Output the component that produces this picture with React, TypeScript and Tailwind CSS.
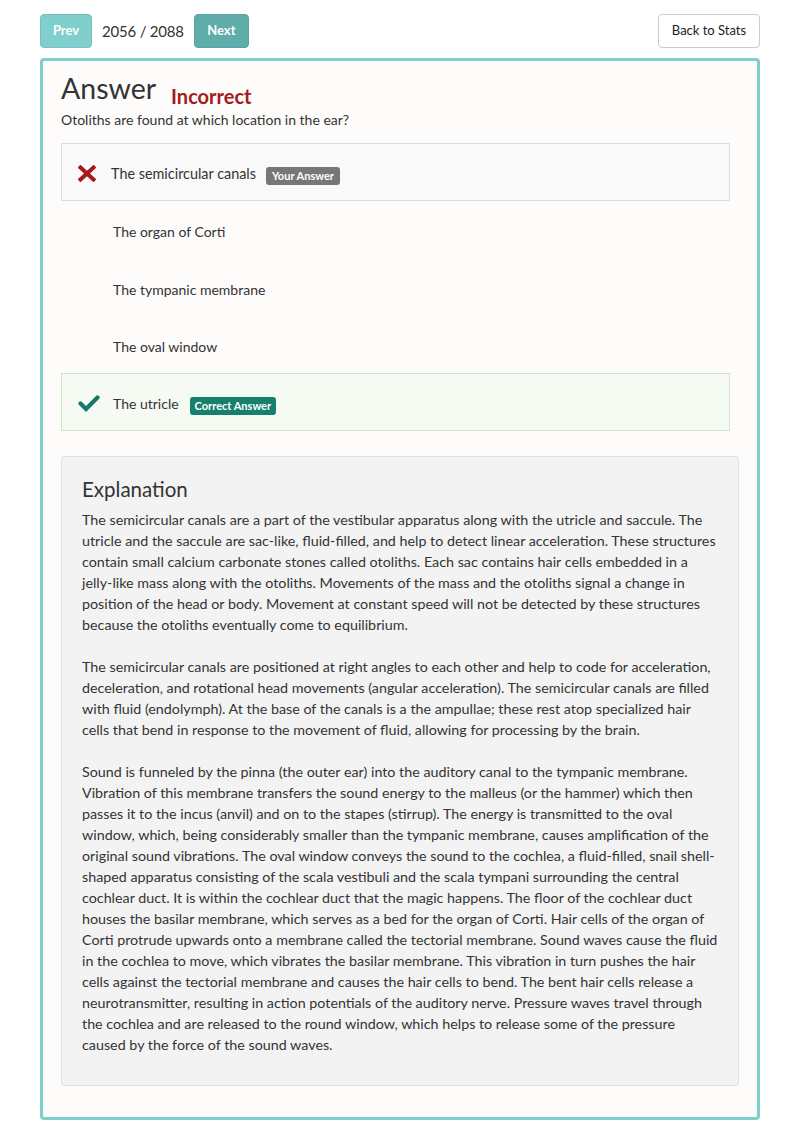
import React from 'react';

const paragraphs = [
  'The semicircular canals are a part of the vestibular apparatus along with the utricle and saccule. The utricle and the saccule are sac-like, fluid-filled, and help to detect linear acceleration. These structures contain small calcium carbonate stones called otoliths. Each sac contains hair cells embedded in a jelly-like mass along with the otoliths. Movements of the mass and the otoliths signal a change in position of the head or body. Movement at constant speed will not be detected by these structures because the otoliths eventually come to equilibrium.',
  'The semicircular canals are positioned at right angles to each other and help to code for acceleration, deceleration, and rotational head movements (angular acceleration). The semicircular canals are filled with fluid (endolymph). At the base of the canals is a the ampullae; these rest atop specialized hair cells that bend in response to the movement of fluid, allowing for processing by the brain.',
  'Sound is funneled by the pinna (the outer ear) into the auditory canal to the tympanic membrane. Vibration of this membrane transfers the sound energy to the malleus (or the hammer) which then passes it to the incus (anvil) and on to the stapes (stirrup). The energy is transmitted to the oval window, which, being considerably smaller than the tympanic membrane, causes amplification of the original sound vibrations. The oval window conveys the sound to the cochlea, a fluid-filled, snail shell-shaped apparatus consisting of the scala vestibuli and the scala tympani surrounding the central cochlear duct. It is within the cochlear duct that the magic happens. The floor of the cochlear duct houses the basilar membrane, which serves as a bed for the organ of Corti. Hair cells of the organ of Corti protrude upwards onto a membrane called the tectorial membrane. Sound waves cause the fluid in the cochlea to move, which vibrates the basilar membrane. This vibration in turn pushes the hair cells against the tectorial membrane and causes the hair cells to bend. The bent hair cells release a neurotransmitter, resulting in action potentials of the auditory nerve. Pressure waves travel through the cochlea and are released to the round window, which helps to release some of the pressure caused by the force of the sound waves.',
];

const Cross = () => (
  <svg width="18" height="17" viewBox="0 0 18 17" className="shrink-0">
    <path d="M2.5 2.5 L15.5 14.5 M15.5 2.5 L2.5 14.5" stroke="#a31b1b" strokeWidth="4" strokeLinecap="square" />
  </svg>
);

const Check = () => (
  <svg width="22" height="17" viewBox="0 0 22 17" className="shrink-0">
    <path d="M2.5 8.5 L8 14 L19.5 2.5" stroke="#17786a" strokeWidth="4.2" fill="none" strokeLinecap="round" strokeLinejoin="miter" />
  </svg>
);

const App = () => {
  return (
    <div className="min-h-[1143px] bg-white px-10 pt-[14px] text-[#333] font-['Lato','Open_Sans',sans-serif]">
      <div className="flex items-center h-[34px]">
        <button className="h-[34px] w-[52px] rounded-[4px] bg-[#80cfcc] border border-[#74c3c0] text-white text-[13px] font-bold">Prev</button>
        <span className="ml-[10px] text-[15px] tracking-[-0.2px] text-[#333]">2056 / 2088</span>
        <button className="ml-[10px] h-[34px] w-[55px] rounded-[4px] bg-[#5fadaa] border border-[#58a4a1] text-white text-[13px] font-bold">Next</button>
        <button className="ml-auto h-[34px] w-[102px] rounded-[4px] bg-white border border-[#ccc] text-[13px] text-[#222]">Back to Stats</button>
      </div>

      <div className="mt-[10px] border-[3px] border-[#7fcfcc] rounded-[4px] bg-[#fdfcfb] px-[18px] pt-[8px] pb-[31px]">
        <div className="flex items-end">
          <h1 className="text-[28.5px] leading-[38px] text-[#333]">Answer</h1>
          <span className="ml-[15px] mb-[-4px] text-[20px] leading-[30px] font-bold text-[#a31b1b]">Incorrect</span>
        </div>
        <p className="text-[14px] leading-[20px] mt-[3px]">Otoliths are found at which location in the ear?</p>

        <div className="mt-[13px] mr-[9px]">
          <div className="h-[58px] flex items-center border border-[#ddd] bg-[#f9f9f9] pl-[16px] pt-[3px] text-[14px]">
            <Cross />
            <span className="ml-[15px] text-[14.4px]">The semicircular canals</span>
            <span className="ml-[10px] mt-[4px] rounded-[3px] bg-[#777] px-[6px] h-[18px] leading-[18px] text-[11px] font-bold text-white">Your Answer</span>
          </div>
          <div className="h-[58px] flex items-center border border-transparent pl-[51px] pt-[3px] text-[14px]">The organ of Corti</div>
          <div className="h-[58px] flex items-center border border-transparent pl-[51px] pt-[3px] text-[14px]">The tympanic membrane</div>
          <div className="h-[56px] flex items-center border border-transparent pl-[51px] pt-[3px] text-[14px]">The oval window</div>
          <div className="h-[58px] flex items-center border border-[#cfe5c9] bg-[#f5faf3] pl-[16px] pt-[3px] text-[14px]">
            <Check />
            <span className="ml-[13px]">The utricle</span>
            <span className="ml-[11px] mt-[4px] rounded-[3px] bg-[#17806d] px-[5px] h-[18px] leading-[18px] text-[11px] font-bold text-white">Correct Answer</span>
          </div>
        </div>

        <div className="mt-[25px] rounded-[4px] border border-[#e0e0e0] bg-[#f3f3f3] px-[20px] pt-[18px] pb-[30px]">
          <h2 className="text-[20.5px] leading-[28px] text-[#333]">Explanation</h2>
          <div className="mt-[6px] space-y-[21px]">
            {paragraphs.map((p, i) => (
              <p key={i} className="text-[14.3px] leading-[21px]">{p}</p>
            ))}
          </div>
        </div>
      </div>
    </div>
  );
};

export default App;
